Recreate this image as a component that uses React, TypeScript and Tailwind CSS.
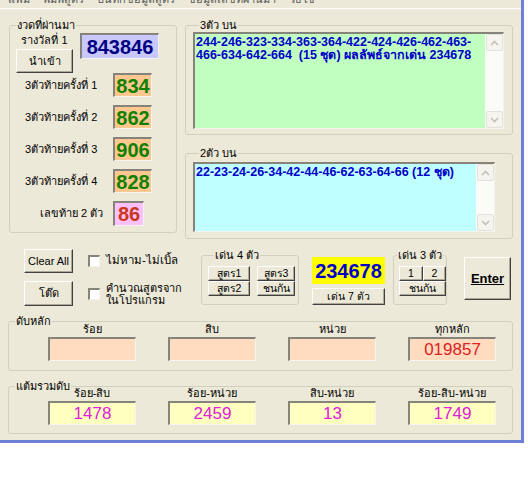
import React from "react"

const sunk =
  "border-t-2 border-l-2 border-b border-r border-t-[#85837a] border-l-[#85837a] border-b-[#f4f3ee] border-r-[#f4f3ee]"

const raised =
  "flex items-center justify-center whitespace-nowrap bg-[#ece9d8] border border-t-white border-l-white border-r-[#404040] border-b-[#404040] shadow-[inset_-1px_-1px_0_#aca899] text-black"

function Btn({ children, className = "" }: { children: React.ReactNode; className?: string }) {
  return <div className={`${raised} ${className}`}>{children}</div>
}

function Group({
  title,
  className = "",
  legendClass = "ml-[6px]",
  children,
}: {
  title: string
  className?: string
  legendClass?: string
  children?: React.ReactNode
}) {
  return (
    <fieldset className={`min-w-0 border border-[#d0d0bf] rounded-[3px] ${className}`}>
      <legend className={`px-[1px] text-[11px] leading-[14px] text-black whitespace-nowrap ${legendClass}`}>{title}</legend>
      {children}
    </fieldset>
  )
}

function Arrow({ up }: { up?: boolean }) {
  return (
    <div className="flex items-center justify-center w-[17px] h-[17px] rounded-[2px] border border-[#e3e1d8] bg-[#f5f4ef]">
      <svg width="9" height="6" viewBox="0 0 9 6">
        <path
          d={up ? "M1 5 L4.5 1.5 L8 5" : "M1 1 L4.5 4.5 L8 1"}
          fill="none"
          stroke="#c3c1b6"
          strokeWidth="1.6"
        />
      </svg>
    </div>
  )
}

function VScroll() {
  return (
    <div className="flex flex-col justify-between w-[18px] h-full bg-[#fbfbf8] pl-[1px]">
      <Arrow up />
      <Arrow />
    </div>
  )
}

function NumBox({ value, className = "" }: { value: string; className?: string }) {
  return (
    <div className={`${sunk} flex items-center justify-center font-bold text-[20px] leading-none ${className}`}>
      {value}
    </div>
  )
}

const recent = [
  { label: "3ตัวท้ายครั้งที่ 1", value: "834" },
  { label: "3ตัวท้ายครั้งที่ 2", value: "862" },
  { label: "3ตัวท้ายครั้งที่ 3", value: "906" },
  { label: "3ตัวท้ายครั้งที่ 4", value: "828" },
]

const digits = [
  { label: "ร้อย", value: "" },
  { label: "สิบ", value: "" },
  { label: "หน่วย", value: "" },
  { label: "ทุกหลัก", value: "019857" },
]

const sums = [
  { label: "ร้อย-สิบ", value: "1478" },
  { label: "ร้อย-หน่วย", value: "2459" },
  { label: "สิบ-หน่วย", value: "13" },
  { label: "ร้อย-สิบ-หน่วย", value: "1749" },
]

export default function App() {
  return (
    <div className="w-[528px] h-[480px] bg-white overflow-hidden font-['Liberation_Sans','Noto_Sans',sans-serif] text-[11px] text-black">
      <div className="w-[524px] h-[443px] bg-[#ece9d8] border-r-[3px] border-b-[3px] border-[#6f7fd6] flex flex-col">
        {/* menu bar, cut off at the top */}
        <div className="h-[9px] overflow-hidden border-b border-white">
          <div className="flex gap-[13px] pl-[8px] -mt-[8px] text-[11px] leading-[14px] text-[#5a5a5a]">
            <span>แฟ้ม</span>
            <span>พิมพ์สูตร</span>
            <span>บันทึกข้อมูลสูตร</span>
            <span>ข้อมูลเลขที่ผ่านมา</span>
            <span>วิธีใช้</span>
          </div>
        </div>

        {/* top section */}
        <div className="flex mt-[9px] pl-[9px]">
          <Group title="งวดที่ผ่านมา" className="w-[168px] h-[215px]">
            <div className="flex pl-[6px] pt-[1px]">
              <div className="flex flex-col items-center w-[57px]">
                <div className="leading-[14px]">รางวัลที่ 1</div>
                <Btn className="w-[57px] h-[24px] mt-[2px]">นำเข้า</Btn>
              </div>
              <NumBox value="843846" className="ml-[7px] w-[79px] h-[26px] bg-[#c8c8ff] text-[#000080]" />
            </div>
            <div className="flex flex-col gap-[8px] pl-[15px]">
              {recent.map((r) => (
                <div key={r.label} className="flex items-center">
                  <div className="w-[88px]">{r.label}</div>
                  <NumBox value={r.value} className="w-[39px] h-[24px] bg-[#ffc890] text-[#108000]" />
                </div>
              ))}
              <div className="flex items-center">
                <div className="w-[88px] pl-[15px]">เลขท้าย 2 ตัว</div>
                <NumBox value="86" className="w-[31px] h-[25px] bg-[#ffc0ff] text-[#c83818]" />
              </div>
            </div>
          </Group>

          <div className="flex flex-col ml-[8px] w-[328px]">
            <Group title="3ตัว บน" className="h-[117px] px-[7px]">
              <div className={`${sunk} flex w-[311px] h-[97px] bg-[#c0ffc0]`}>
                <div className="flex-1 pl-[1px] pt-[2px] font-bold text-[12.5px] leading-[13px] text-[#0000c8] whitespace-pre">
                  {"244-246-323-334-363-364-422-424-426-462-463-\n466-634-642-664  (15 ชุด) ผลลัพธ์จากเด่น 234678"}
                </div>
                <VScroll />
              </div>
            </Group>
            <Group title="2ตัว บน" className="mt-[11px] h-[93px] px-[7px]">
              <div className={`${sunk} flex mt-[2px] w-[302px] h-[70px] bg-[#c0ffff]`}>
                <div className="flex-1 pl-[1px] pt-[2px] font-bold text-[12.5px] leading-[13px] text-[#0000c8] whitespace-pre">
                  22-23-24-26-34-42-44-46-62-63-64-66 (12 ชุด)
                </div>
                <VScroll />
              </div>
            </Group>
          </div>
        </div>

        {/* controls row */}
        <div className="flex items-start h-[58px] mt-[9px]">
          <div className="flex flex-col ml-[24px] mt-[1px] gap-[8px]">
            <Btn className="w-[49px] h-[24px] text-[11px]">Clear All</Btn>
            <Btn className="w-[49px] h-[25px] text-[11px]">โต๊ด</Btn>
          </div>
          <div className="flex flex-col ml-[15px] mt-[1px] gap-[8px] w-[112px]">
            <div className="flex items-center h-[24px]">
              <div className={`${sunk} w-[12px] h-[12px] bg-white shrink-0`} />
              <span className="ml-[6px] text-[11.5px] whitespace-nowrap">ไม่หาม-ไม่เบิ้ล</span>
            </div>
            <div className="flex items-center h-[25px]">
              <div className={`${sunk} w-[12px] h-[12px] bg-white shrink-0`} />
              <span className="ml-[6px] text-[11px] leading-[12px] whitespace-nowrap">
                คำนวณสูตรจาก
                <br />
                ในโปรแกรม
              </span>
            </div>
          </div>
          <Group title="เด่น 4 ตัว" className="ml-[1px] w-[98px] h-[57px] px-[6px]">
            <div className="grid grid-cols-[42px_38px] gap-x-[7px] mt-[4px] text-[10.5px] leading-none">
              <Btn className="h-[15px]">สูตร1</Btn>
              <Btn className="h-[15px]">สูตร3</Btn>
              <Btn className="h-[15px]">สูตร2</Btn>
              <Btn className="h-[15px]">ชนกัน</Btn>
            </div>
          </Group>
          <div className="flex flex-col ml-[13px] mt-[9px] w-[73px]">
            <div className="flex items-center justify-center h-[27px] bg-[#ffff00] text-[#0000c8] font-bold text-[20px] leading-none">
              234678
            </div>
            <Btn className="h-[17px] mt-[4px] text-[10.5px]">เด่น 7 ตัว</Btn>
          </div>
          <Group title="เด่น 3 ตัว" legendClass="ml-[3px]" className="ml-[8px] w-[54px] h-[57px]">
            <div className="flex flex-col mt-[4px] ml-[5px] text-[10.5px] leading-none">
              <div className="flex">
                <Btn className="w-[24px] h-[15px]">1</Btn>
                <Btn className="w-[23px] h-[15px]">2</Btn>
              </div>
              <Btn className="w-[47px] h-[15px]">ชนกัน</Btn>
            </div>
          </Group>
          <Btn className="ml-[17px] mt-[9px] w-[47px] h-[43px] font-bold text-[13px] underline">Enter</Btn>
        </div>

        {/* digit groups */}
        <Group title="ดับหลัก" className="ml-[8px] mt-[8px] w-[505px] h-[57px]">
          <div className="flex gap-[32px] pl-[39px] -mt-[5px]">
            {digits.map((d) => (
              <div key={d.label} className="flex flex-col items-center w-[88px]">
                <div className="leading-[13px]">{d.label}</div>
                <div className={`${sunk} flex items-center justify-center w-[88px] h-[24px] mt-[1px] bg-[#ffdcc0] text-[17px] text-[#e02020]`}>
                  {d.value}
                </div>
              </div>
            ))}
          </div>
        </Group>

        <Group title="แต้มรวมดับ" className="ml-[8px] mt-[8px] w-[505px] h-[55px]">
          <div className="flex gap-[32px] pl-[39px] -mt-[6px]">
            {sums.map((d) => (
              <div key={d.label} className="flex flex-col items-center w-[88px]">
                <div className="leading-[13px]">{d.label}</div>
                <div className={`${sunk} flex items-center justify-center w-[88px] h-[24px] mt-[1px] bg-[#ffffc0] text-[17px] text-[#e020d8]`}>
                  {d.value}
                </div>
              </div>
            ))}
          </div>
        </Group>
      </div>
    </div>
  )
}
